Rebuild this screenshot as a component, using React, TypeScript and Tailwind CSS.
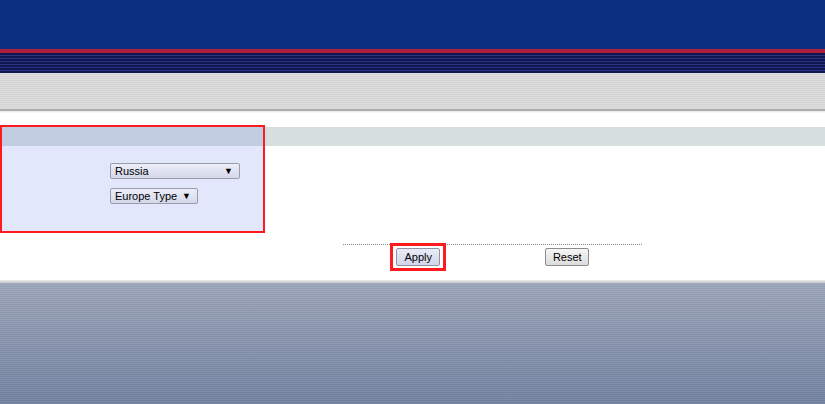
import React from "react";

function FakeSelect({ label, width }: { label: string; width: string }) {
  return (
    <div
      className={`${width} h-[16px] whitespace-nowrap flex items-center justify-between pl-[4px] pr-[6px] border border-[#9a9cab] rounded-[2px] bg-[linear-gradient(to_bottom,#eceef8,#d5d8ea)] text-[11px] leading-none text-black`}
    >
      <span>{label}</span>
      <span className="text-[9px]">▼</span>
    </div>
  );
}

export default function App() {
  return (
    <div className="w-[825px] h-[404px] overflow-hidden flex flex-col bg-white font-['Liberation_Sans',Arial,sans-serif]">
      {/* top header */}
      <div className="h-[49px] bg-[#0c2f80]" />
      <div className="h-[4px] bg-[#ad1d3c]" />
      <div className="h-[20px] bg-[repeating-linear-gradient(to_bottom,#101650_0px,#101650_2px,#2a3482_2px,#2a3482_3px)]" />
      <div className="h-[36px] bg-[repeating-linear-gradient(to_bottom,#dcdddc_0px,#dcdddc_1px,#d3d4d3_1px,#d3d4d3_2px)]" />
      <div className="h-[2px] bg-[#aeaeae]" />
      <div className="h-[2px] bg-[linear-gradient(to_bottom,#e6e6e6,#ffffff)]" />

      {/* content */}
      <div className="h-[167px] pt-[12px] flex flex-col">
        <div className="flex">
          <div className="w-[265px] h-[108px] border-2 border-[#ff1a1f] flex flex-col">
            <div className="h-[19px] bg-[#c2cde2]" />
            <div className="flex-1 bg-[#e3e7fb] flex flex-col pl-[108px] pt-[17px] gap-[9px]">
              <FakeSelect label="Russia" width="w-[130px]" />
              <FakeSelect label="Europe Type" width="w-[88px]" />
            </div>
          </div>
          <div className="flex-1 pt-[2px]">
            <div className="h-[19px] bg-[#d7dfde]" />
          </div>
        </div>
        <div className="ml-[343px] w-[299px] mt-[11px] border-t border-dotted border-[#8a8a8a] flex">
          <div className="w-1/2 flex justify-center">
            <div className="-mt-[2px] border-[3px] border-[#ff1a1f] px-[3px] pt-[2px] pb-[2px] ml-[1px]">
              <div className="w-[44px] h-[18px] flex items-center justify-center border border-[#8f93a6] rounded-[2px] bg-[linear-gradient(to_bottom,#e9ebf6,#d2d6ea)] text-[11px] text-black">
                Apply
              </div>
            </div>
          </div>
          <div className="w-1/2 flex justify-center pt-[3px]">
            <div className="w-[44px] h-[18px] flex items-center justify-center border border-[#8c8c8c] rounded-[2px] bg-[linear-gradient(to_bottom,#f6f6f6,#dcdcdc)] text-[11px] text-black">
              Reset
            </div>
          </div>
        </div>
      </div>

      {/* bottom */}
      <div className="h-[3px] bg-[linear-gradient(to_bottom,#ececec,#c4c4c4)]" />
      <div className="flex-1 bg-[repeating-linear-gradient(to_bottom,rgba(255,255,255,0.07)_0px,rgba(255,255,255,0.07)_1px,rgba(0,0,0,0.03)_1px,rgba(0,0,0,0.03)_2px),linear-gradient(to_bottom,#9ba4b8,#7181a0)]" />
    </div>
  );
}
